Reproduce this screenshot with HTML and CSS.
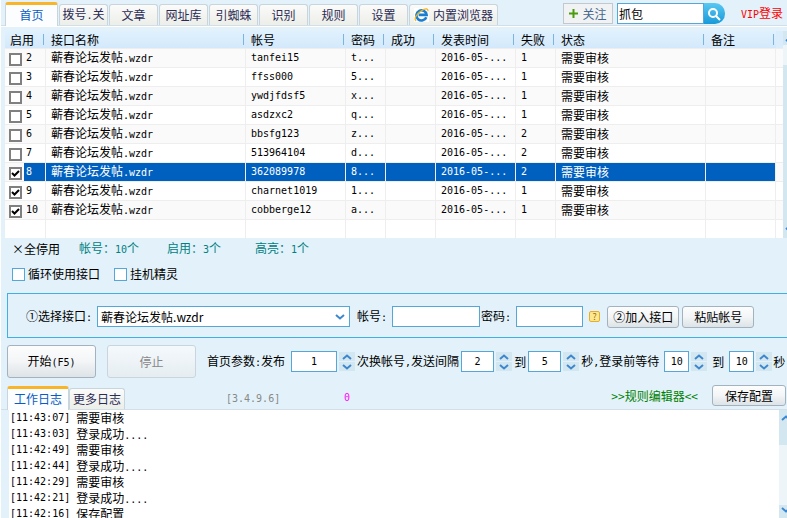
FILE: index.html
```html
<!DOCTYPE html>
<html lang="zh-CN">
<head>
  <meta charset="UTF-8">
  <meta name="viewport" content="width=device-width, initial-scale=1">
  <title>首页</title>
  <link rel="stylesheet" href="styles.css">
</head>
<body>

<!-- chevrons shared by the spinners, the drop-down and the scrollbars -->
<svg class="defs" aria-hidden="true">
  <symbol id="up" viewBox="0 0 10 6"><path d="M1 5l4-3.5L9 5" fill="none" stroke="#3d87cf" stroke-width="2"/></symbol>
  <symbol id="down" viewBox="0 0 10 6"><path d="M1 1l4 3.5L9 1" fill="none" stroke="#3d87cf" stroke-width="2"/></symbol>
</svg>

<header class="topbar">
  <nav class="tabs">
    <button class="tab active">首页</button>
    <button class="tab">拨号<span class="en">.</span>关</button>
    <button class="tab">文章</button>
    <button class="tab">网址库</button>
    <button class="tab">引蜘蛛</button>
    <button class="tab">识别</button>
    <button class="tab">规则</button>
    <button class="tab">设置</button>
    <button class="tab browser">
      <svg width="15" height="14" viewBox="0 0 15 14" aria-hidden="true">
        <rect width="15" height="14" fill="#fff"/>
        <path d="M12.3 9.2A5.1 5.1 0 1 1 12.6 6.9H4.6" fill="none" stroke="#1b7fd0" stroke-width="2.6"/>
        <path d="M2.2 12.9C-.6 11.500 2.500 6 7 3S14.500.5 13.900 3.300" fill="none" stroke="#f0b323" stroke-width="1.300"/>
      </svg>
      内置浏览器
    </button>
  </nav>
  <div class="tools">
    <button class="follow">
      <svg width="9" height="9" viewBox="0 0 9 9" aria-hidden="true"><path d="M4.500 0v9M0 4.500h9" stroke="#4c9a0d" stroke-width="2"/></svg>
      关注
    </button>
    <form class="search">
      <input type="text" value="抓包" aria-label="搜索">
      <button type="button" aria-label="搜索">
        <svg width="14" height="14" viewBox="0 0 14 14" aria-hidden="true"><circle cx="6" cy="6" r="4" fill="none" stroke="#fff" stroke-width="2"/><path d="M9 9l4 4" stroke="#fff" stroke-width="2"/></svg>
      </button>
    </form>
    <a class="vip" href="#"><span class="en">VIP</span>登录</a>
  </div>
</header>

<main class="list">
  <table>
    <colgroup>
      <col class="c41"><col class="c200"><col class="c100"><col class="c40"><col class="c50"><col class="c80"><col class="c40"><col class="c150"><col class="c70"><col>
    </colgroup>
    <thead>
      <tr><th>启用</th><th>接口名称</th><th>帐号</th><th>密码</th><th>成功</th><th>发表时间</th><th>失败</th><th>状态</th><th>备注</th><th></th></tr>
    </thead>
    <tbody id="rows"></tbody>
  </table>
  <div class="scroll">
    <svg width="10" height="6" aria-hidden="true"><use href="#up"/></svg>
    <svg width="10" height="6" aria-hidden="true"><use href="#down"/></svg>
  </div>
</main>

<div class="stats">
  <button class="plain">×全停用</button>
  <span>帐号：<span class="en">10</span>个</span>
  <span>启用：<span class="en">3</span>个</span>
  <span>高亮：<span class="en">1</span>个</span>
</div>

<div class="options">
  <label><input type="checkbox">循环使用接口</label>
  <label><input type="checkbox">挂机精灵</label>
</div>

<section class="account">
  <label for="api">①选择接口<span class="en">:</span></label>
  <div class="select">
    <select id="api"><option>蕲春论坛发帖.wzdr</option></select>
    <svg width="10" height="6" aria-hidden="true"><use href="#down"/></svg>
  </div>
  <label for="user">帐号<span class="en">:</span></label>
  <input type="text" id="user" class="user">
  <label for="pass">密码<span class="en">:</span></label>
  <input type="password" id="pass" class="pass">
  <button class="help">?</button>
  <button class="btn">②加入接口</button>
  <button class="btn">粘贴帐号</button>
</section>

<section class="params">
  <button class="btn big"><span>开始<span class="en">(F5)</span></span></button>
  <button class="btn big" disabled>停止</button>
  <label for="p1">首页参数<span class="en">:</span>发布</label>
  <div class="spin wide"><input type="text" id="p1" value="1"></div>
  <label for="p2">次换帐号<span class="en">,</span>发送间隔</label>
  <div class="spin"><input type="text" id="p2" value="2"></div>
  <label for="p3">到</label>
  <div class="spin"><input type="text" id="p3" value="5"></div>
  <label for="p4">秒<span class="en">,</span>登录前等待</label>
  <div class="spin small"><input type="text" id="p4" value="10"></div>
  <label for="p5" class="to">到</label>
  <div class="spin small"><input type="text" id="p5" value="10"></div>
  <span>秒</span>
</section>

<div class="logbar">
  <button class="tab active">工作日志</button>
  <button class="tab">更多日志</button>
  <span class="version en">[3.4.9.6]</span>
  <span class="count en">0</span>
  <a class="editor" href="#">&gt;&gt;规则编辑器&lt;&lt;</a>
  <button class="btn save">保存配置</button>
</div>

<div class="log">
  <div id="log" class="lines"></div>
  <div class="scroll">
    <svg width="10" height="6" aria-hidden="true"><use href="#up"/></svg>
    <svg width="10" height="6" aria-hidden="true"><use href="#down"/></svg>
  </div>
</div>

<script src="script.js"></script>
</body>
</html>
```

FILE: styles.css
```css
* {
  box-sizing: border-box;
}
body {
  display: flex;
  flex-direction: column;
  height: 100vh;
  margin: 0;
  border-left: 1px solid #fff;
  background: #e3f2fa;
  color: #000;
  overflow: hidden;
}
body, button, input, select {
  font-family: "Noto Sans CJK SC", sans-serif;
  font-size: 12px;
  line-height: 16px;
}
button {
  padding: 0;
  white-space: nowrap;
}
a {
  text-decoration: none;
}
label, span, a {
  white-space: nowrap;
}
.en {
  font-family: "DejaVu Sans Mono", monospace;
  font-size: 10px;
}
.defs {
  position: absolute;
  width: 0;
  height: 0;
}

/* Tabs */
.topbar {
  display: flex;
  justify-content: space-between;
  flex: none;
  height: 27px;
  padding-left: 4px;
  border-bottom: 1px solid #fff;
  box-shadow: inset 0 -1px #d3dee6;
}
.tabs {
  display: flex;
  align-items: flex-end;
  gap: 1px;
}
.tab {
  width: 49px;
  height: 21px;
  margin-bottom: 1px;
  padding-bottom: 1px;
  border: 1px solid #c9d5dc;
  border-bottom: none;
  border-radius: 3px 3px 0 0;
  background: linear-gradient(#fbfbfa, #eceee8);
  color: #2b2b55;
}
.tab.active {
  width: 53px;
  height: 24px;
  margin-bottom: 0;
  padding-bottom: 2px;
  border-top: 3px solid #f9b52a;
  background: #fbfdff;
  color: #0a5bc4;
}
.tab.browser {
  display: flex;
  align-items: center;
  justify-content: center;
  gap: 4px;
  width: 89px;
}
.tools {
  display: flex;
  align-items: flex-start;
  gap: 4px;
  padding: 3px 4px 0 0;
}
.follow {
  display: flex;
  align-items: center;
  justify-content: center;
  gap: 4px;
  width: 50px;
  height: 21px;
  border: 1px solid #c4c8cc;
  background: #f1f2f3;
  color: #45688f;
}
.search {
  display: flex;
  height: 21px;
}
.search input {
  width: 87px;
  border: 1px solid #55a7da;
  padding: 0 1px;
}
.search button {
  display: flex;
  align-items: center;
  justify-content: center;
  width: 21px;
  border: none;
  border-radius: 0 10px 10px 0;
  background: linear-gradient(#5ac8f2, #189ad9);
}
.vip {
  margin: 2px 0 0 12px;
  color: #f00;
}

/* Account list */
.list {
  display: flex;
  flex: none;
  height: 207px;
  margin: 4px 0 0 4px;
  background: #fff;
}
table {
  flex: 1;
  width: 0;
  height: 207px;
  table-layout: fixed;
  border-collapse: separate;
  border-spacing: 0;
}
.c40 { width: 40px; }
.c41 { width: 41px; }
.c50 { width: 50px; }
.c70 { width: 70px; }
.c80 { width: 80px; }
.c100 { width: 100px; }
.c150 { width: 150px; }
.c200 { width: 200px; }
th {
  height: 17px;
  padding: 0 0 0 5px;
  background: linear-gradient(90deg, #7db4df, #7db4df) right 2px center / 1px 11px no-repeat, linear-gradient(#e0f1fe, #d3e9fb);
  font-weight: normal;
  text-align: left;
  white-space: nowrap;
}
th:last-child {
  background: #d9edfc;
}
td {
  height: 19px;
  padding: 0 0 0 5px;
  border-top: 1px solid #eee;
  border-right: 1px solid #eee;
  white-space: nowrap;
  overflow: hidden;
}
td:last-child {
  border-right: none;
}
tbody tr:nth-child(odd) td {
  background: #fafafa;
}
tbody tr:last-child td {
  background: #fff;
}
td:first-child {
  padding-left: 4px;
}
td label {
  display: flex;
  align-items: center;
  gap: 4px;
}
tbody tr.selected td:not(:last-child) {
  background: #0060c0;
  color: #fff;
}
tbody tr.selected td:first-child {
  background: linear-gradient(90deg, #fafafa 19px, #0060c0 19px);
}
input[type="checkbox"] {
  appearance: none;
  flex: none;
  width: 13px;
  height: 13px;
  margin: 0;
  border: 1px solid #55a7da;
  background: #fff;
}
td input[type="checkbox"] {
  margin-top: 2px;
  border: 2px solid #808080;
}
td input[type="checkbox"]:checked {
  background: #fff url("data:image/svg+xml,%3Csvg xmlns='http://www.w3.org/2000/svg' viewBox='0 0 9 9'%3E%3Cpath d='M1 4l2.500 2.500L8 2' fill='none' stroke='%23000' stroke-width='2'/%3E%3C/svg%3E");
}
.scroll {
  display: flex;
  flex-direction: column;
  justify-content: space-between;
  flex: none;
  width: 4px;
  padding: 5px 0 5px 2px;
  background: linear-gradient(#d3e7f1 14px, #edf5f9 14px, #edf5f9 34px, #d3e7f1 34px);
  overflow: hidden;
}
.scroll svg {
  flex: none;
}

.stats {
  display: flex;
  flex: none;
  align-items: center;
  height: 22px;
  padding-left: 11px;
  color: #008080;
}
.stats > span {
  width: 88px;
}
.plain {
  width: 67px;
  border: none;
  background: none;
  color: #000;
  text-align: left;
}
.options {
  display: flex;
  flex: none;
  gap: 14px;
  height: 28px;
  padding-left: 11px;
}
.options label {
  display: flex;
  align-items: center;
  gap: 3px;
}

/* Choose interface */
.account {
  display: flex;
  flex: none;
  align-items: center;
  height: 45px;
  margin: 5px 0 0 6px;
  padding: 2px 0 0 18px;
  border: 1px solid #3fb0e4;
  border-right: none;
}
input[type="text"], input[type="password"], select {
  height: 21px;
  border: 1px solid #55a7da;
  border-radius: 0;
  background: #fff;
  color: #000;
}
.account label {
  margin-right: 5px;
}
.select {
  display: flex;
  flex: 1;
  align-items: center;
  max-width: 253px;
  margin-right: 7px;
}
.select select {
  appearance: none;
  width: 100%;
  padding: 0 3px;
}
.select svg {
  margin-left: -15px;
  margin-right: 5px;
  pointer-events: none;
}
.user {
  width: 88px;
  margin-right: 1px;
}
.pass {
  width: 67px;
}
.help {
  width: 11px;
  height: 11px;
  margin: 0 7px 0 6px;
  border: 1px solid #e9ae25;
  border-radius: 2px;
  background: #fde892;
  color: #a36a00;
  font-size: 9px;
  line-height: 9px;
}
.btn {
  width: 72px;
  height: 22px;
  border: 1px solid #a3b2bf;
  border-radius: 3px;
  background: linear-gradient(#fdfdfd, #f3f5f6 50%, #dde3e7);
  color: #000;
}
.btn + .btn {
  margin-left: 3px;
}

/* Start, stop and timing */
.params {
  display: flex;
  flex: none;
  align-items: center;
  height: 33px;
  margin: 7px 0 0 6px;
}
.btn.big {
  width: 89px;
  height: 33px;
  margin: 0 11px 0 0;
}
.btn:disabled {
  border-color: #c9d5dc;
  background: linear-gradient(#f4f9fc, #e6edf1);
  color: #888;
}
.spin {
  display: flex;
  align-items: center;
  gap: 2px;
  margin: 0 2px;
}
.spin.wide {
  margin-left: 6px;
}
.spin input {
  width: 33px;
  padding: 0;
  font-family: "DejaVu Sans Mono", monospace;
  font-size: 10px;
  text-align: center;
}
.spin.wide input {
  width: 46px;
}
.spin.small input {
  width: 25px;
}
.spin.small {
  margin: 0 1px 0 5px;
}
.params .to {
  margin-left: 4px;
}
.arrows {
  display: flex;
  flex-direction: column;
  gap: 1px;
}
.arrows button {
  display: flex;
  align-items: center;
  justify-content: center;
  width: 16px;
  height: 9px;
  border: none;
  background: #d3e7f1;
}

/* Log */
.logbar {
  display: flex;
  flex: none;
  align-items: flex-end;
  height: 25px;
  margin-top: 7px;
  padding: 0 1px 0 6px;
  box-shadow: inset 0 -1px #d3dee6;
}
.logbar .tab {
  width: 56px;
  margin-bottom: 1px;
}
.logbar .tab.active {
  width: 62px;
  margin-bottom: 0;
}
.version {
  width: 118px;
  margin: 0 0 3px 101px;
  color: #888;
}
.count {
  margin-bottom: 4px;
  color: #f0f;
}
.editor {
  margin: 0 14px 6px auto;
  color: #008000;
}
.save {
  width: 74px;
  height: 21px;
  margin-bottom: 4px;
}
.log {
  display: flex;
  flex: 1;
  min-height: 0;
  margin-left: 8px;
  background: #fff;
}
.lines {
  flex: 1;
  padding: 0 1px;
  overflow: hidden;
}
.lines p {
  display: flex;
  gap: 6px;
  margin: 0;
  height: 16px;
}
.log .scroll {
  width: 8px;
  background: linear-gradient(#d3e7f1 35px, #edf5f9 35px, #edf5f9 95px, #d3e7f1 95px);
}
```

FILE: script.js
```js
const rows = [
  [2, 'tanfei15', 't...', 1],
  [3, 'ffss000', '5...', 1],
  [4, 'ywdjfdsf5', 'x...', 1],
  [5, 'asdzxc2', 'q...', 1],
  [6, 'bbsfg123', 'z...', 2],
  [7, '513964104', 'd...', 2],
  [8, '362089978', '8...', 2],
  [9, 'charnet1019', '1...', 1],
  [10, 'cobberge12', 'a...', 1]
];
const body = document.getElementById('rows');

rows.forEach(([id, user, pass, failed]) => {
  const tr = document.createElement('tr');
  if (id === 8) tr.className = 'selected';
  tr.innerHTML = `
    <td><label><input type="checkbox" ${id >= 8 ? 'checked' : ''}><span class="en">${id}</span></label></td>
    <td>蕲春论坛发帖<span class="en">.wzdr</span></td>
    <td class="en">${user}</td>
    <td class="en">${pass}</td>
    <td></td>
    <td class="en">2016-05-...</td>
    <td class="en">${failed}</td>
    <td>需要审核</td>
    <td></td>
    <td></td>
  `;
  body.appendChild(tr);
});
body.insertAdjacentHTML('beforeend', '<tr>' + '<td></td>'.repeat(10) + '</tr>');

document.querySelectorAll('.spin').forEach(spin => {
  const input = spin.querySelector('input');
  const arrows = document.createElement('div');
  arrows.className = 'arrows';
  arrows.innerHTML = `
    <button aria-label="增加"><svg width="10" height="6"><use href="#up"/></svg></button>
    <button aria-label="减少"><svg width="10" height="6"><use href="#down"/></svg></button>
  `;
  const [up, down] = arrows.children;
  up.onclick = () => { input.value = Number(input.value) + 1; };
  down.onclick = () => { input.value = Math.max(0, Number(input.value) - 1); };
  spin.appendChild(arrows);
});

const logs = [
  ['11:43:07', '需要审核'],
  ['11:43:03', '登录成功', '....'],
  ['11:42:49', '需要审核'],
  ['11:42:44', '登录成功', '....'],
  ['11:42:29', '需要审核'],
  ['11:42:21', '登录成功', '....'],
  ['11:42:16', '保存配置']
];
document.getElementById('log').innerHTML = logs.map(([time, text, dots = '']) =>
  `<p><span class="en">[${time}]</span><span>${text}<span class="en">${dots}</span></span></p>`
).join('');
```
